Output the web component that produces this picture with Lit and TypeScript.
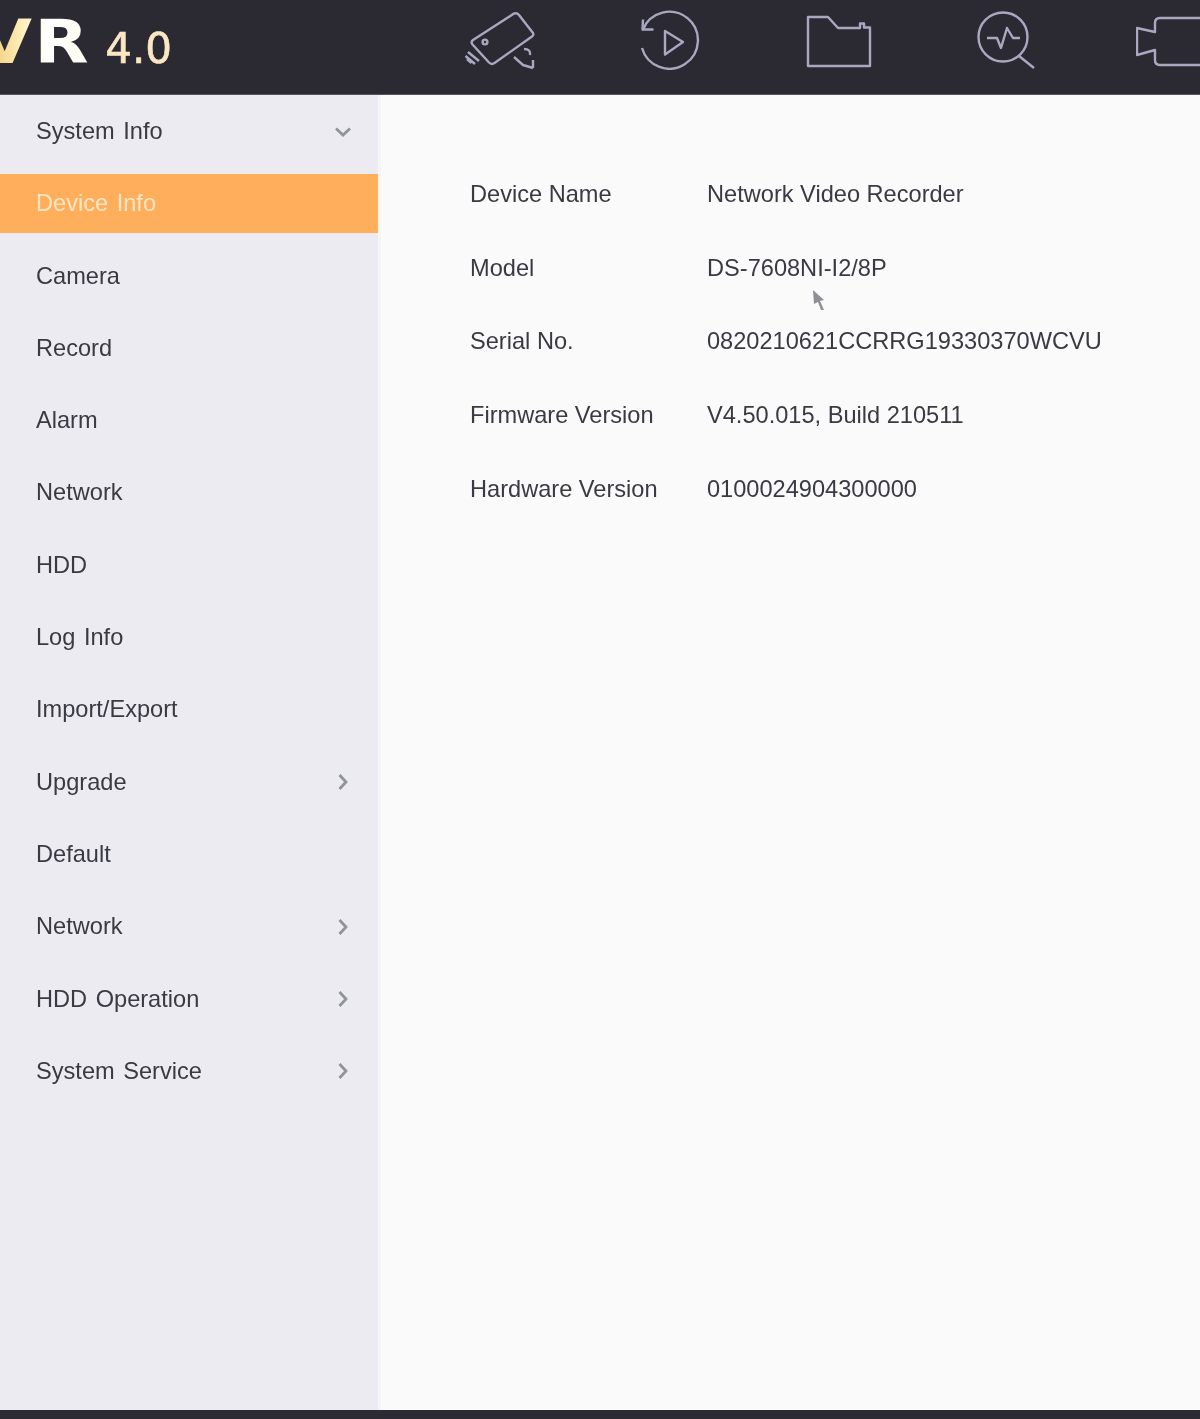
import { LitElement, html, css, svg } from "lit";
import { customElement } from "lit/decorators.js";

const MENU: { label: string; arrow?: "down" | "right"; active?: boolean }[] = [
  { label: "System Info", arrow: "down" },
  { label: "Device Info", active: true },
  { label: "Camera" },
  { label: "Record" },
  { label: "Alarm" },
  { label: "Network" },
  { label: "HDD" },
  { label: "Log Info" },
  { label: "Import/Export" },
  { label: "Upgrade", arrow: "right" },
  { label: "Default" },
  { label: "Network", arrow: "right" },
  { label: "HDD Operation", arrow: "right" },
  { label: "System Service", arrow: "right" },
];

const INFO = [
  ["Device Name", "Network Video Recorder"],
  ["Model", "DS-7608NI-I2/8P"],
  ["Serial No.", "0820210621CCRRG19330370WCVU"],
  ["Firmware Version", "V4.50.015, Build 210511"],
  ["Hardware Version", "0100024904300000"],
];

const ICONS = [
  {
    cx: 500,
    body: svg`<path d="M511 15.500 L473 40 Q470.500 42 472.500 44.500 L489 62.500 Q491.500 65 494.500 63 L532 36.500 Q534 35 533 33 L519 15 Q516 11.500 511 15.500Z"/>
      <circle cx="485" cy="42" r="2.400"/>
      <path d="M468 52 L479 61 M465.500 56 L475 64 M467 59 L471.500 63"/>
      <path d="M514 57 L523 65 L533 68 M533 60 V68 M524 49 Q531 49 530 55"/>`,
  },
  {
    cx: 669,
    body: svg`<path d="M643 29.500 A28.500 28.500 0 1 1 642 48"/>
      <path d="M643 19.500 L642.500 29.500 L653.500 29.500"/>
      <path d="M665 31 L683 42 L665 54.500 Z"/>`,
  },
  {
    cx: 838,
    body: svg`<path d="M808 17 H828 L838 28 H860 V23.500 H864 V27.500 H870 V66 H808 Z"/>`,
  },
  {
    cx: 1007,
    body: svg`<circle cx="1003" cy="37" r="24.500"/>
      <path d="M1019 56 L1034 68"/>
      <path d="M987 38 H997 L1001 48 L1007 28 L1013 38 H1020"/>`,
  },
  {
    cx: 1176,
    body: svg`<path d="M1210 18 H1160 Q1155 18 1155 23 V32 L1137 28 V55 L1155 50 V60 Q1155 65 1160 65 H1210"/>`,
  },
];

@customElement("app-root")
export class AppRoot extends LitElement {
  static styles = css`
    :host {
      display: flex;
      flex-direction: column;
      width: 1200px;
      height: 1419px;
      overflow: hidden;
      position: relative;
      font-family: "Liberation Sans", Arial, sans-serif;
      background: #fafafb;
    }
    .header {
      flex: 0 0 95px;
      background: #2b2a32;
      display: flex;
      align-items: flex-start;
      overflow: hidden;
      border-bottom: 1px solid #55555c;
      box-sizing: border-box;
    }
    .brand {
      flex: 0 0 460px;
      display: flex;
      align-items: baseline;
      gap: 14.500px;
      height: 95px;
      margin-left: -7.500px;
      margin-right: 7.500px;
      white-space: nowrap;
      filter: blur(0.5px);
    }
    .brand-main {
      font-family: "DejaVu Sans", sans-serif;
      font-weight: 700;
      font-size: 61px;
      letter-spacing: 2px;
      line-height: 84px;
      background: linear-gradient(90deg, #e9bb5c 0%, #fff0bb 40%, #ffffff 62%, #fffdf0 100%);
      -webkit-background-clip: text;
      background-clip: text;
      color: transparent;
      transform: scaleX(1.16);
      transform-origin: right center;
    }
    .brand-ver {
      font-family: "DejaVu Sans", sans-serif;
      font-size: 42px;
      line-height: 84px;
      color: #fbe7c4;
      -webkit-text-stroke: 0.6px #fbe7c4;
    }
    .icons {
      display: flex;
      gap: 89px;
      padding-top: 4px;
      filter: blur(0.5px);
    }
    .icon {
      flex: 0 0 80px;
      width: 80px;
      height: 72px;
      fill: none;
      stroke: #a9a8c0;
      stroke-width: 2.400;
      stroke-linejoin: round;
    }
    .main {
      flex: 1;
      display: flex;
      min-height: 0;
    }
    .side {
      flex: 0 0 381px;
      background: #ecebf2;
      border-right: 3px solid #f5f5f8;
      display: flex;
      flex-direction: column;
      gap: 13.300px;
      padding-top: 7px;
      box-sizing: border-box;
    }
    .item {
      flex: 0 0 59px;
      display: flex;
      align-items: center;
      justify-content: space-between;
      padding: 0 26px 0 36px;
      font-size: 23.600px;
      word-spacing: 2px;
      color: #3a3a43;
    }
    .item span {
      filter: blur(0.4px);
    }
    .item.active {
      background: #ffae5b;
      color: #fde6c6;
    }
    .chev {
      width: 18px;
      height: 18px;
      fill: none;
      stroke: #8f9499;
      stroke-width: 2.800;
      filter: blur(0.5px);
    }
    .content {
      flex: 1;
      padding: 77.500px 0 0 89px;
      display: grid;
      grid-template-columns: 237px 1fr;
      grid-auto-rows: 44px;
      row-gap: 29.700px;
      align-content: start;
      font-size: 23.600px;
      color: #3a3a43;
    }
    .content > div {
      display: flex;
      align-items: center;
      white-space: nowrap;
      filter: blur(0.4px);
    }
    .footer {
      flex: 0 0 9px;
      background: #2c2b33;
    }
    .cursor {
      position: absolute;
      left: 812px;
      top: 289px;
      width: 14px;
      height: 22px;
      filter: blur(0.7px);
    }
  `;

  render() {
    return html`
      <div class="header">
        <div class="brand">
          <span class="brand-main">VR</span><span class="brand-ver">4.0</span>
        </div>
        <div class="icons">
          ${ICONS.map(
            (i) => html`<svg class="icon" viewBox="${i.cx - 40} 4 80 72">${i.body}</svg>`
          )}
        </div>
      </div>
      <div class="main">
        <div class="side">
          ${MENU.map(
            (m) => html`<div class="item ${m.active ? "active" : ""}">
              <span>${m.label}</span>
              ${m.arrow === "down"
                ? html`<svg class="chev" viewBox="0 0 18 18"><path d="M2 5.500 L9 12 L16 5.500" /></svg>`
                : m.arrow === "right"
                ? html`<svg class="chev" viewBox="0 0 18 18"><path d="M5.500 2 L12 9 L5.500 16" /></svg>`
                : ""}
            </div>`
          )}
        </div>
        <div class="content">
          ${INFO.map(([k, v]) => html`<div>${k}</div><div>${v}</div>`)}
        </div>
      </div>
      <div class="footer"></div>
      <svg class="cursor" viewBox="0 0 14 22">
        <path d="M1 1 L12 11 L8 12 L12 21 L9 21 L6 13 L2 15 Z" fill="#8f8f95" />
      </svg>
    `;
  }
}
